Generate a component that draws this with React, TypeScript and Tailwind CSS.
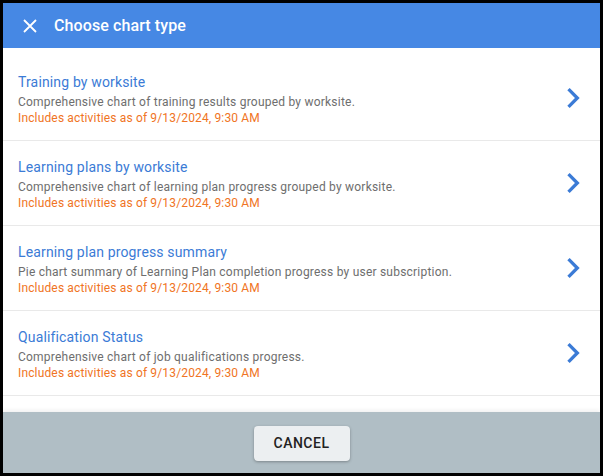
import React from "react";

const items = [
  {
    title: "Training by worksite",
    desc: "Comprehensive chart of training results grouped by worksite.",
  },
  {
    title: "Learning plans by worksite",
    desc: "Comprehensive chart of learning plan progress grouped by worksite.",
  },
  {
    title: "Learning plan progress summary",
    desc: "Pie chart summary of Learning Plan completion progress by user subscription.",
  },
  {
    title: "Qualification Status",
    desc: "Comprehensive chart of job qualifications progress.",
  },
];

export default function App() {
  return (
    <div className="w-[603px] h-[476px] bg-black p-[3px]" style={{ fontFamily: "Roboto, 'Noto Sans', sans-serif" }}>
      <div className="w-[597px] h-[470px] bg-white flex flex-col overflow-hidden">
        <div className="h-[45px] bg-[#4688e4] flex items-center shrink-0">
          <div className="w-[52px] flex items-center justify-center pl-[1px]">
            <svg width="14" height="14" viewBox="0 0 14 14">
              <path d="M1 1 L13 13 M13 1 L1 13" stroke="white" strokeWidth="1.8" strokeLinecap="butt" />
            </svg>
          </div>
          <div className="text-white text-[16px] font-medium leading-none ml-[-1px] tracking-[0.1px]">Choose chart type</div>
        </div>
        <div className="pt-[8px] pb-[16px] flex-1">
          {items.map((it) => (
            <div key={it.title} className="h-[85px] border-b border-[#e9e9e9] flex items-center pl-[15px] pr-[7px]">
              <div className="flex-1 pt-[1px]">
                <div className="text-[14px] leading-[20px] text-[#3b7bd6] tracking-[0.15px]">{it.title}</div>
                <div className="text-[12px] leading-[16px] mt-[2px] text-[#6e6e6e] tracking-[0.22px]">{it.desc}</div>
                <div className="text-[12px] leading-[16px] text-[#f07424] tracking-[0.15px]">
                  Includes activities as of 9/13/2024, 9:30 AM
                </div>
              </div>
              <svg width="40" height="40" viewBox="0 0 24 24" className="shrink-0">
                <path d="M10 6 8.59 7.41 13.17 12l-4.58 4.59L10 18l6-6z" fill="#3b7bd6" />
              </svg>
            </div>
          ))}
        </div>
        <div className="h-[61px] bg-[#b0bec5] flex items-center justify-center shrink-0 shadow-[0_-2px_4px_rgba(0,0,0,0.06)]">
          <button className="w-[96px] h-[35px] rounded-[4px] bg-[#eceff1] text-[14px] font-medium text-[#222] tracking-[0.5px] shadow-[0_1px_3px_rgba(0,0,0,0.3)] mt-[2px]">
            CANCEL
          </button>
        </div>
      </div>
    </div>
  );
}
